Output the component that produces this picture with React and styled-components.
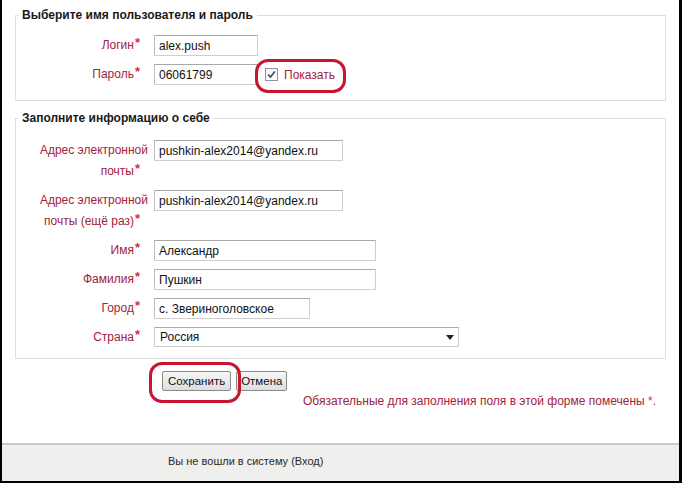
import React from "react";
import styled, { createGlobalStyle } from "styled-components";

const GlobalStyle = createGlobalStyle`
  html, body {
    margin: 0;
    padding: 0;
    background: #ffffff;
  }
  body {
    font-family: "Liberation Sans", Arial, sans-serif;
    font-size: 12px;
    color: #222;
  }
`;

const Page = styled.div`
  width: 682px;
  height: 483px;
  box-sizing: border-box;
  border-left: 2px solid #000;
  border-right: 3px solid #000;
  border-bottom: 2px solid #000;
  display: flex;
  flex-direction: column;
  background: #fff;
  overflow: hidden;
`;

const Main = styled.div`
  flex: 1;
  padding: 8px 13px 0 13px;
`;

const Fieldset = styled.fieldset`
  margin: ${(p) => p.$mt || 0}px 0 0 0;
  padding: ${(p) => p.$pt}px 0 ${(p) => p.$pb}px 0;
  border: 1px solid #dedede;
  min-width: 0;
  display: flex;
  flex-direction: column;
  gap: 8px;
`;

const Legend = styled.legend`
  margin-left: 2px;
  padding: 0 4px;
  font-size: 12px;
  font-weight: bold;
  line-height: 14px;
  color: #1a1a1a;
`;

const Row = styled.div`
  display: flex;
  align-items: flex-start;
`;

const Label = styled.label`
  width: 132px;
  flex-shrink: 0;
  text-align: right;
  line-height: 21px;
  color: #a3213a;
  font-size: 12px;
`;

const Req = styled.span`
  display: inline-block;
  color: #d92a45;
  font-size: 13px;
  font-weight: bold;
  line-height: 10px;
  vertical-align: top;
  margin-top: 3px;
  margin-left: 1px;
  margin-right: 8px;
`;

const Fields = styled.div`
  margin-left: 6px;
  display: flex;
  align-items: center;
`;

const Input = styled.input`
  width: ${(p) => p.$w}px;
  height: 21px;
  box-sizing: border-box;
  border: 1px solid #cfcfcf;
  border-top-color: #a9a9a9;
  border-left-color: #bdbdbd;
  padding: 0 4px;
  margin: 0;
  font-family: "Liberation Sans", Arial, sans-serif;
  font-size: 12px;
  color: #111;
  background: #fff;
  outline: none;
`;

const SelectBox = styled.div`
  width: ${(p) => p.$w}px;
  height: 20px;
  box-sizing: border-box;
  border: 1px solid #c9c9c9;
  border-top-color: #aaaaaa;
  display: flex;
  align-items: center;
  justify-content: space-between;
  padding: 0 4px 0 5px;
  font-size: 12px;
  color: #111;
  background: #fff;
`;

const ShowToggle = styled.span`
  position: relative;
  display: inline-flex;
  align-items: center;
  margin-left: 7px;
  gap: 6px;
  color: #a3213a;
  font-size: 12px;
`;

const Check = styled.span`
  width: 13px;
  height: 13px;
  box-sizing: border-box;
  border: 1px solid #8d92a6;
  background: linear-gradient(#f3f3f6, #ffffff);
  display: inline-flex;
  align-items: center;
  justify-content: center;
`;

const Highlight = styled.span`
  position: absolute;
  left: ${(p) => p.$l}px;
  right: ${(p) => p.$r}px;
  top: ${(p) => p.$t}px;
  bottom: ${(p) => p.$b}px;
  border: 3.5px solid #c8142f;
  border-radius: 13px;
  pointer-events: none;
`;

const Buttons = styled.div`
  display: flex;
  gap: 5px;
  margin-top: 12px;
  padding-left: 147px;
`;

const SaveWrap = styled.span`
  position: relative;
  display: inline-flex;
`;

const Button = styled.button`
  height: 20px;
  padding: 0 ${(p) => p.$px || 5}px;
  margin: 0;
  border: 1px solid #8a8a8a;
  border-radius: 2px;
  background: linear-gradient(#f7f7f7, #dedede);
  font-family: "Liberation Sans", Arial, sans-serif;
  font-size: 11.5px;
  color: #111;
`;

const Note = styled.div`
  text-align: right;
  padding-right: 10px;
  margin-top: 2px;
  line-height: 16px;
  color: #a3213a;
  font-size: 12px;
`;

const NoteStar = styled.span`
  color: #d92a45;
`;

const Footer = styled.div`
  height: 27px;
  box-sizing: content-box;
  border-top: 2px solid #c9c9c7;
  background: #efefed;
  display: flex;
  align-items: flex-start;
  padding: 9px 0 0 166px;
  font-size: 11px;
  line-height: 14px;
  color: #2a2a2a;
`;

const Caret = () => (
  <svg width="8" height="5" viewBox="0 0 8 5">
    <path d="M0 0 L8 0 L4 5 Z" fill="#222" />
  </svg>
);

const Tick = () => (
  <svg width="9" height="9" viewBox="0 0 9 9">
    <path d="M1.2 4.6 L3.5 7 L7.8 1.4" fill="none" stroke="#3d4a66" strokeWidth="1.6" />
  </svg>
);

const Field = ({ label, children }) => (
  <Row>
    <Label>{label}</Label>
    <Fields>{children}</Fields>
  </Row>
);

export default function App() {
  return (
    <>
      <GlobalStyle />
      <Page>
        <Main>
          <Fieldset $pt={13} $pb={15}>
            <Legend>Выберите имя пользователя и пароль</Legend>
            <Field label={<>Логин<Req>*</Req></>}>
              <Input $w={104} defaultValue="alex.push" readOnly />
            </Field>
            <Field label={<>Пароль<Req>*</Req></>}>
              <Input $w={104} defaultValue="06061799" readOnly />
              <ShowToggle>
                <Check>
                  <Tick />
                </Check>
                Показать
                <Highlight $l={-10} $r={-11} $t={-9} $b={-11} />
              </ShowToggle>
            </Field>
          </Fieldset>

          <Fieldset $mt={10} $pt={15} $pb={10}>
            <Legend>Заполните информацию о себе</Legend>
            <Field label={<>Адрес электронной<br />почты<Req>*</Req></>}>
              <Input $w={189} defaultValue="pushkin-alex2014@yandex.ru" readOnly />
            </Field>
            <Field label={<>Адрес электронной<br />почты (ещё раз)<Req>*</Req></>}>
              <Input $w={189} defaultValue="pushkin-alex2014@yandex.ru" readOnly />
            </Field>
            <Field label={<>Имя<Req>*</Req></>}>
              <Input $w={222} defaultValue="Александр" readOnly />
            </Field>
            <Field label={<>Фамилия<Req>*</Req></>}>
              <Input $w={222} defaultValue="Пушкин" readOnly />
            </Field>
            <Field label={<>Город<Req>*</Req></>}>
              <Input $w={156} defaultValue="с. Звериноголовское" readOnly />
            </Field>
            <Field label={<>Страна<Req>*</Req></>}>
              <SelectBox $w={305}>
                <span>Россия</span>
                <Caret />
              </SelectBox>
            </Field>
          </Fieldset>

          <Buttons>
            <SaveWrap>
              <Button $px={5}>Сохранить</Button>
              <Highlight $l={-13} $r={-10} $t={-9} $b={-12} />
            </SaveWrap>
            <Button $px={4}>Отмена</Button>
          </Buttons>
          <Note>
            Обязательные для заполнения поля в этой форме помечены <NoteStar>*</NoteStar>.
          </Note>
        </Main>
        <Footer>Вы не вошли в систему (Вход)</Footer>
      </Page>
    </>
  );
}
